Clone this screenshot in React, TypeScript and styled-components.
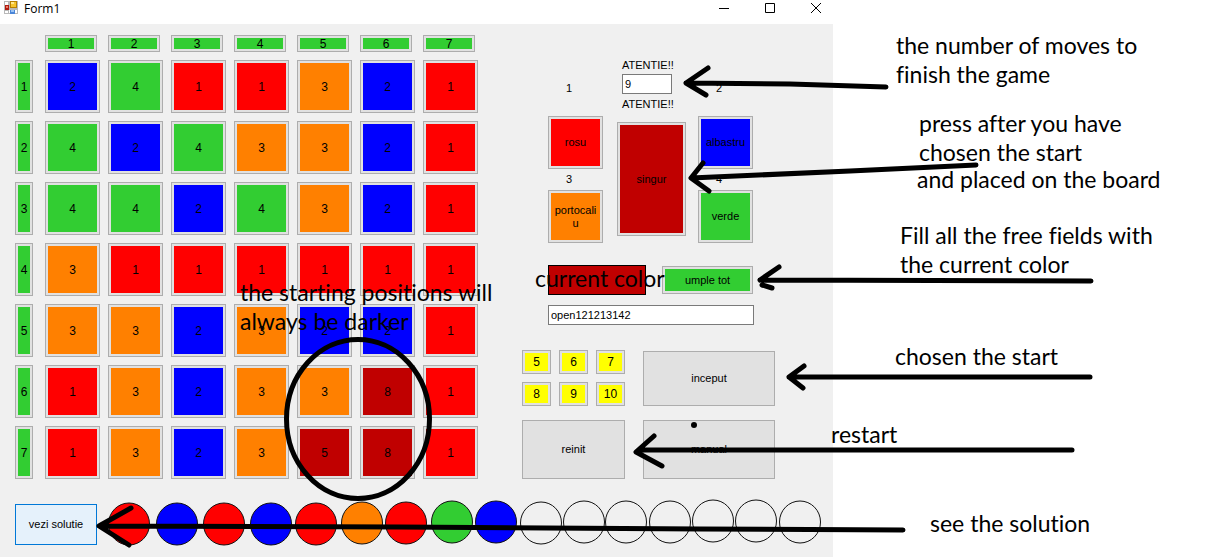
import React from "react";
import styled, { createGlobalStyle } from "styled-components";

const COLORS: Record<string, string> = {
  red: "#ff0000",
  blue: "#0000ff",
  green: "#32cd32",
  orange: "#ff8000",
  dark: "#c00000",
  yellow: "#ffff00",
};

const GlobalStyle = createGlobalStyle`
  * { box-sizing: border-box; }
  body {
    margin: 0;
    background: #ffffff;
    color: #000000;
    font-family: "Liberation Sans", Arial, sans-serif;
    font-size: 11px;
  }
`;

const Page = styled.main`
  position: relative;
  display: grid;
  grid-template-columns: minmax(833px, 69%) 1fr;
  min-height: 100vh;
  overflow: hidden;
`;

const FormWindow = styled.section`
  display: flex;
  flex-direction: column;
  background: #f0f0f0;
`;

const TitleBar = styled.header`
  display: flex;
  align-items: flex-start;
  height: 24px;
  padding: 0 1px 0 4px;
  background: #ffffff;
`;

const Title = styled.h1`
  flex: 1;
  margin: 0 0 0 6px;
  font: 400 12px/18px "Open Sans", "Noto Sans", sans-serif;
`;

const WindowControls = styled.div`
  display: flex;
  gap: 14px;
`;

const WindowButton = styled.button`
  display: flex;
  align-items: center;
  justify-content: center;
  width: 32px;
  height: 17px;
  padding: 0;
  border: 0;
  background: transparent;
`;

const FormBody = styled.div`
  display: flex;
  align-items: flex-start;
  gap: 44px;
  padding: 11px 15px 0;
`;

const Board = styled.div`
  display: flex;
  flex-direction: column;
  gap: 8px;
`;

const BoardRow = styled.div`
  display: flex;
  gap: 12px;
`;

const Cells = styled.div`
  display: grid;
  grid-template-columns: repeat(7, 55px);
  gap: 8px;
`;

const Corner = styled.div`
  width: 18px;
`;

const Button = styled.button<{ $w: number; $h: number }>`
  width: ${(p) => p.$w}px;
  height: ${(p) => p.$h}px;
  padding: 0;
  border: 1px solid #adadad;
  background: #e1e1e1;
  color: #000000;
  font: 400 11px/13px "Liberation Sans", Arial, sans-serif;
`;

const ColorButton = styled(Button)<{ $color: string }>`
  padding: 0 4px;
  background: ${(p) => COLORS[p.$color]};
  box-shadow: inset 0 0 0 2px #e1e1e1;
  word-break: break-all;
`;

const DigitButton = styled(ColorButton)`
  padding: 1px 0 0;
  font-size: 12px;
`;

const FocusButton = styled(Button)`
  border-color: #0078d7;
  background: #e5f1fb;
`;

const Controls = styled.div`
  display: flex;
  flex-direction: column;
  padding-top: 21px;
`;

const Palette = styled.div`
  display: flex;
  align-items: flex-start;
  padding-left: 26px;
`;

const ColorColumn = styled.div`
  display: flex;
  flex-direction: column;
  padding-top: 22px;
`;

const ColorNumber = styled.span<{ $first?: boolean }>`
  margin-bottom: ${(p) => (p.$first ? 18 : 0)}px;
  padding-left: 18px;
  line-height: ${(p) => (p.$first ? 20 : 21)}px;
`;

const MovesColumn = styled.div`
  display: flex;
  flex-direction: column;
  margin: 0 12px 0 14px;
`;

const MovesLabel = styled.label`
  padding-left: 5px;
  line-height: 18px;
`;

const TextBox = styled.input<{ $w: number }>`
  width: ${(p) => p.$w}px;
  height: 20px;
  padding: 0 2px;
  border: 1px solid #7a7a7a;
  background: #ffffff;
  color: #000000;
  font: 400 11px/16px "Liberation Sans", Arial, sans-serif;
`;

const MovesBox = styled(TextBox)`
  margin: 0 0 0 5px;
`;

const MovesFooter = styled(MovesLabel)`
  margin-bottom: 8px;
  line-height: 20px;
`;

const CurrentRow = styled.div`
  display: flex;
  align-items: center;
  gap: 16px;
  margin: 22px 0 10px;
  padding-left: 26px;
`;

const Swatch = styled.div`
  width: 98px;
  height: 30px;
  border: 1px solid #000000;
  background: ${COLORS.dark};
`;

const CodeRow = styled.div`
  padding-left: 26px;
  display: flex;
`;

const Actions = styled.div`
  display: flex;
  align-items: flex-end;
  gap: 18px;
  margin-top: 25px;
`;

const ActionColumn = styled.div`
  display: flex;
  flex-direction: column;
  gap: 14px;
`;

const Keypad = styled.div`
  display: grid;
  grid-template-columns: repeat(3, 29px);
  gap: 8px;
`;

const SolutionRow = styled.footer`
  display: flex;
  align-items: center;
  gap: 11px;
  margin-top: 22px;
  padding-left: 15px;
`;

const Markup = styled.svg`
  position: absolute;
  top: 0;
  left: 0;
  pointer-events: none;
`;

const Note = styled.p<{ $x: number; $y: number }>`
  position: absolute;
  left: ${(p) => p.$x}px;
  top: ${(p) => p.$y}px;
  margin: 0;
  font: 400 23px/29px Lato, "Open Sans", sans-serif;
  font-variant-ligatures: none;
  white-space: pre-line;
  pointer-events: none;
`;

const COLOR_OF: Record<string, string> = {
  "1": "red",
  "2": "blue",
  "3": "orange",
  "4": "green",
  "5": "dark",
  "8": "dark",
};

const BOARD = ["2411321", "4243321", "4424321", "3111111", "3323221", "1323381", "1323581"];

const SOLUTION: [number, number, string][] = [
  [129, 524, "red"],
  [177, 524, "blue"],
  [224, 524, "red"],
  [271, 524, "blue"],
  [316, 524, "red"],
  [362, 523, "orange"],
  [406, 523, "red"],
  [452, 522, "green"],
  [496, 522, "blue"],
  [541, 523, ""],
  [584, 522, ""],
  [626, 522, ""],
  [670, 522, ""],
  [713, 521, ""],
  [756, 521, ""],
  [800, 522, ""],
];

const NOTES: [number, number, string][] = [
  [896, 31, "the number of moves to\nfinish the game"],
  [919, 109, "press after you have\nchosen the start"],
  [917, 165, "and placed on the board"],
  [900, 221, "Fill all the free fields with\nthe current color"],
  [895, 342, "chosen the start"],
  [831, 420, "restart"],
  [930, 509, "see the solution"],
  [240, 278, "the starting positions will\nalways be darker"],
  [535, 264, "current color"],
];

const ARROWS = [
  "M886 87L790 84L686 83M708 68L686 83L706 95",
  "M976 165L850 171L691 178M703 163L691 178L709 191",
  "M1091 281L760 280M779 267L760 280M762 285L772 288",
  "M1090 377L789 377M804 366L789 377L803 388",
  "M1072 450L640 450M654 436L636 452L662 466",
  "M903 530L700 529L400 527L100 526M131 508L99 526L129 545",
];

function FormIcon() {
  return (
    <svg width="14" height="15" viewBox="0 0 14 15" aria-hidden="true">
      <path d="M0 1h14v13H0z" fill="#b9b9b9" />
      <path d="M1 2h3v3H1zM1 11h3v2H1zM11 10h2v3h-2zM5 10h1v3H5z" fill="#fff" />
      <path d="M1 5h4v5H1z" fill="#b01c10" />
      <path d="M2 6h2v2H2z" fill="#ef7762" />
      <path d="M6 1h7v7H6z" fill="#b78000" />
      <path d="M7 2h5v5H7z" fill="#f7c52d" />
      <path d="M7 2h3v2H7z" fill="#ffe78c" />
      <path d="M6 10h5v4H6z" fill="#4a86d8" />
      <path d="M7 10h3v2H7z" fill="#9bc4f4" />
    </svg>
  );
}

export default function App() {
  return (
    <Page>
      <GlobalStyle />
      <FormWindow>
        <TitleBar>
          <FormIcon />
          <Title>Form1</Title>
          <WindowControls>
            <WindowButton aria-label="Minimize">
              <svg width="10" height="11" stroke="#000"><path d="M0 5.500h10" /></svg>
            </WindowButton>
            <WindowButton aria-label="Maximize">
              <svg width="10" height="11" stroke="#000" fill="none"><path d="M.5 .5h9v9h-9z" /></svg>
            </WindowButton>
            <WindowButton aria-label="Close">
              <svg width="10" height="11" stroke="#000"><path d="M0 0l10 10M10 0L0 10" /></svg>
            </WindowButton>
          </WindowControls>
        </TitleBar>

        <FormBody>
          <Board>
            <BoardRow>
              <Corner />
              <Cells>
                {[1, 2, 3, 4, 5, 6, 7].map((n) => (
                  <DigitButton key={n} $w={52} $h={17} $color="green">{n}</DigitButton>
                ))}
              </Cells>
            </BoardRow>
            {BOARD.map((row, r) => (
              <BoardRow key={r}>
                <DigitButton $w={18} $h={53} $color="green">{r + 1}</DigitButton>
                <Cells>
                  {row.split("").map((d, c) => (
                    <DigitButton key={c} $w={55} $h={53} $color={COLOR_OF[d]}>{d}</DigitButton>
                  ))}
                </Cells>
              </BoardRow>
            ))}
          </Board>

          <Controls>
            <Palette>
              <ColorColumn>
                <ColorNumber $first>1</ColorNumber>
                <ColorButton $w={55} $h={53} $color="red">rosu</ColorButton>
                <ColorNumber>3</ColorNumber>
                <ColorButton $w={55} $h={53} $color="orange">portocaliu</ColorButton>
              </ColorColumn>
              <MovesColumn>
                <MovesLabel htmlFor="moves">ATENTIE!!</MovesLabel>
                <MovesBox id="moves" $w={50} defaultValue="9" />
                <MovesFooter htmlFor="moves">ATENTIE!!</MovesFooter>
                <ColorButton $w={69} $h={114} $color="dark">singur</ColorButton>
              </MovesColumn>
              <ColorColumn>
                <ColorNumber $first>2</ColorNumber>
                <ColorButton $w={55} $h={53} $color="blue">albastru</ColorButton>
                <ColorNumber>4</ColorNumber>
                <ColorButton $w={55} $h={53} $color="green">verde</ColorButton>
              </ColorColumn>
            </Palette>

            <CurrentRow>
              <Swatch />
              <ColorButton $w={91} $h={28} $color="green">umple tot</ColorButton>
            </CurrentRow>
            <CodeRow>
              <TextBox $w={206} aria-label="Code" defaultValue="open121213142" />
            </CodeRow>

            <Actions>
              <ActionColumn>
                <Keypad>
                  {[5, 6, 7, 8, 9, 10].map((n) => (
                    <DigitButton key={n} $w={29} $h={24} $color="yellow">{n}</DigitButton>
                  ))}
                </Keypad>
                <Button $w={103} $h={59}>reinit</Button>
              </ActionColumn>
              <ActionColumn>
                <Button $w={132} $h={55}>inceput</Button>
                <Button $w={132} $h={59}>manual</Button>
              </ActionColumn>
            </Actions>
          </Controls>
        </FormBody>

        <SolutionRow>
          <FocusButton $w={82} $h={41}>vezi solutie</FocusButton>
          <svg width="715" height="47" viewBox="108 501 715 47" overflow="visible" aria-hidden="true">
            {SOLUTION.map(([x, y, color]) => (
              <ellipse key={x} cx={x} cy={y} rx="20.500" ry="21" fill={COLORS[color] ?? "none"} stroke="#111" />
            ))}
          </svg>
        </SolutionRow>
      </FormWindow>

      <Markup width="1206" height="557" fill="none" stroke="#000" strokeWidth="5" strokeLinecap="round" strokeLinejoin="round" aria-hidden="true">
        <ellipse cx="358" cy="419" rx="71.500" ry="79.500" />
        {ARROWS.map((d) => (
          <path key={d} d={d} />
        ))}
        <circle cx="694" cy="425" r="3" fill="#000" stroke="none" />
      </Markup>
      {NOTES.map(([x, y, text]) => (
        <Note key={text} $x={x} $y={y}>{text}</Note>
      ))}
    </Page>
  );
}
